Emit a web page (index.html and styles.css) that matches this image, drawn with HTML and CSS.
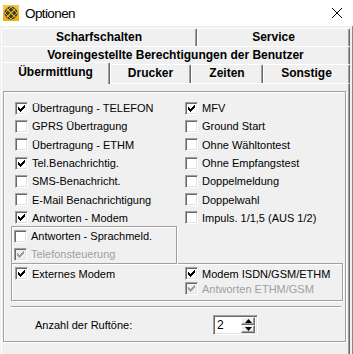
FILE: index.html
```html
<!DOCTYPE html>
<html lang="de">
<head>
    <meta charset="UTF-8">
    <title>Optionen</title>
    <link rel="stylesheet" href="styles.css">
</head>
<body>
    <div class="titlebar">
        <svg class="app-icon" width="16" height="16" viewBox="0 0 16 16">
            <rect x="0" y="0" width="16" height="16" fill="#e8b414"/>
            <rect x="0" y="0" width="16" height="8" fill="#f7d257" opacity="0.6"/>
            <circle cx="8" cy="8" r="6.5" fill="#3a3a3a"/>
            <path d="M8 2 L14 8 L8 14 L2 8 Z" fill="none" stroke="#e8b414" stroke-width="1"/>
            <path d="M3.5 3.5 L12.5 12.5 M12.5 3.5 L3.5 12.5" stroke="#e8b414" stroke-width="1.2"/>
        </svg>
        <span class="title">Optionen</span>
        <svg class="close" width="12" height="12" viewBox="0 0 12 12">
            <path d="M1 1 L11 11 M11 1 L1 11" stroke="#000" stroke-width="1"/>
        </svg>
    </div>

    <div class="client">
        <div class="tabs">
            <div class="tab-row">
                <div class="tab w-scharf">Scharfschalten</div>
                <div class="tab w-service">Service</div>
            </div>
            <div class="tab-row">
                <div class="tab w-full">Voreingestellte Berechtigungen der Benutzer</div>
            </div>
            <div class="tab-row front">
                <div class="tab selected w-uebermittlung">Übermittlung</div>
                <div class="tab w-drucker">Drucker</div>
                <div class="tab w-zeiten">Zeiten</div>
                <div class="tab w-sonstige">Sonstige</div>
            </div>
        </div>

        <div class="page">
            <div class="frame">
                <div class="columns">
                    <div class="col-left">
                        <div class="check"><span class="cb on"><svg viewBox="0 0 13 13"><path d="M9 3h1v1h-1zM8 4h2v1h-2zM3 5h1v1h-1zM7 5h3v1h-3zM3 6h2v1h-2zM6 6h3v1h-3zM3 7h5v1h-5zM4 8h3v1h-3zM5 9h1v1h-1z"/></svg></span>Übertragung - TELEFON</div>
                        <div class="check"><span class="cb"></span>GPRS Übertragung</div>
                        <div class="check"><span class="cb"></span>Übertragung - ETHM</div>
                        <div class="check"><span class="cb on"><svg viewBox="0 0 13 13"><path d="M9 3h1v1h-1zM8 4h2v1h-2zM3 5h1v1h-1zM7 5h3v1h-3zM3 6h2v1h-2zM6 6h3v1h-3zM3 7h5v1h-5zM4 8h3v1h-3zM5 9h1v1h-1z"/></svg></span>Tel.Benachrichtig.</div>
                        <div class="check"><span class="cb"></span>SMS-Benachricht.</div>
                        <div class="check"><span class="cb"></span>E-Mail Benachrichtigung</div>
                        <div class="check"><span class="cb on"><svg viewBox="0 0 13 13"><path d="M9 3h1v1h-1zM8 4h2v1h-2zM3 5h1v1h-1zM7 5h3v1h-3zM3 6h2v1h-2zM6 6h3v1h-3zM3 7h5v1h-5zM4 8h3v1h-3zM5 9h1v1h-1z"/></svg></span>Antworten - Modem</div>

                        <div class="subbox">
                            <div class="check"><span class="cb"></span>Antworten - Sprachmeld.</div>
                            <div class="check disabled"><span class="cb on"><svg viewBox="0 0 13 13"><path d="M9 3h1v1h-1zM8 4h2v1h-2zM3 5h1v1h-1zM7 5h3v1h-3zM3 6h2v1h-2zM6 6h3v1h-3zM3 7h5v1h-5zM4 8h3v1h-3zM5 9h1v1h-1z"/></svg></span>Telefonsteuerung</div>
                        </div>
                    </div>
                    <div class="col-right">
                        <div class="check"><span class="cb on"><svg viewBox="0 0 13 13"><path d="M9 3h1v1h-1zM8 4h2v1h-2zM3 5h1v1h-1zM7 5h3v1h-3zM3 6h2v1h-2zM6 6h3v1h-3zM3 7h5v1h-5zM4 8h3v1h-3zM5 9h1v1h-1z"/></svg></span>MFV</div>
                        <div class="check"><span class="cb"></span>Ground Start</div>
                        <div class="check"><span class="cb"></span>Ohne Wähltontest</div>
                        <div class="check"><span class="cb"></span>Ohne Empfangstest</div>
                        <div class="check"><span class="cb"></span>Doppelmeldung</div>
                        <div class="check"><span class="cb"></span>Doppelwahl</div>
                        <div class="check"><span class="cb"></span>Impuls. 1/1,5 (AUS 1/2)</div>
                    </div>
                </div>

                <div class="modem-box">
                    <div class="modem-left">
                        <div class="check"><span class="cb on"><svg viewBox="0 0 13 13"><path d="M9 3h1v1h-1zM8 4h2v1h-2zM3 5h1v1h-1zM7 5h3v1h-3zM3 6h2v1h-2zM6 6h3v1h-3zM3 7h5v1h-5zM4 8h3v1h-3zM5 9h1v1h-1z"/></svg></span>Externes Modem</div>
                    </div>
                    <div class="modem-right">
                        <div class="check"><span class="cb on"><svg viewBox="0 0 13 13"><path d="M9 3h1v1h-1zM8 4h2v1h-2zM3 5h1v1h-1zM7 5h3v1h-3zM3 6h2v1h-2zM6 6h3v1h-3zM3 7h5v1h-5zM4 8h3v1h-3zM5 9h1v1h-1z"/></svg></span>Modem ISDN/GSM/ETHM</div>
                        <div class="check disabled"><span class="cb on"><svg viewBox="0 0 13 13"><path d="M9 3h1v1h-1zM8 4h2v1h-2zM3 5h1v1h-1zM7 5h3v1h-3zM3 6h2v1h-2zM6 6h3v1h-3zM3 7h5v1h-5zM4 8h3v1h-3zM5 9h1v1h-1z"/></svg></span>Antworten ETHM/GSM</div>
                    </div>
                </div>

                <div class="separator"></div>

                <div class="rings">
                    <span class="rings-label">Anzahl der Ruftöne:</span>
                    <div class="spin">
                        <span class="spin-value">2</span>
                        <div class="spin-buttons">
                            <div class="spin-btn"><svg width="7" height="4" viewBox="0 0 7 4"><path d="M3.5 0 L7 4 L0 4 Z"/></svg></div>
                            <div class="spin-btn"><svg width="7" height="4" viewBox="0 0 7 4"><path d="M0 0 L7 0 L3.5 4 Z"/></svg></div>
                        </div>
                    </div>
                </div>
            </div>
        </div>
    </div>
</body>
</html>
```

FILE: styles.css
```css
* {
    margin: 0;
    padding: 0;
    box-sizing: border-box;
}

body {
    width: 353px;
    height: 354px;
    overflow: hidden;
    background: #f0f0f0;
    font-family: "Liberation Sans", Arial, sans-serif;
    font-size: 11px;
    color: #000;
}

/* title bar */
.titlebar {
    height: 26px;
    background: #fff;
    display: flex;
    align-items: center;
    padding-left: 3px;
}

.app-icon {
    display: block;
}

.title {
    margin-left: 6px;
    font-size: 13.5px;
    letter-spacing: -0.6px;
}

.close {
    margin-left: auto;
    margin-right: 10px;
}

/* client area */
.client {
    height: 328px;
    padding: 2px 2px 0 1px;
    border-right: 1px solid #8c8c8c;
}

.tab-row {
    display: flex;
    height: 18px;
}

.tab-row.front {
    height: 19px;
    align-items: flex-end;
}

.tab {
    height: 100%;
    background: #f0f0f0;
    border: 1px solid #fff;
    border-right-color: #696969;
    border-bottom: none;
    border-radius: 2px 2px 0 0;
    box-shadow: inset -1px 0 #a0a0a0;
    font-weight: bold;
    font-size: 12px;
    text-align: center;
    line-height: 17px;
}

.tab.selected {
    position: relative;
    z-index: 1;
    height: 22px;
    margin-top: -2px;
    margin-bottom: -1px;
    line-height: 18px;
}

.w-scharf { width: 196px; }
.w-service { width: 153px; }
.w-full { width: 349px; }
.w-uebermittlung { width: 109px; }
.w-drucker { width: 81px; }
.w-zeiten { width: 72px; }
.w-sonstige { width: 87px; }

/* tab page */
.page {
    height: 280px;
    border-top: 1px solid #fff;
    border-left: 1px solid #fff;
    border-right: 1px solid #696969;
    box-shadow: inset -1px 0 #a0a0a0;
    padding: 7px 0 0 1px;
}

.frame {
    width: 343px;
    border: 1px solid #a0a0a0;
    box-shadow: 1px 1px 0 #fff, inset 1px 1px 0 #fff;
    padding: 7px 0 6px 0;
}

.columns {
    display: flex;
}

.col-left {
    width: 177px;
    padding-left: 7px;
}

.col-left > .check {
    padding-left: 4px;
}

.col-right {
    flex: 1;
}

.col-right .check {
    padding-left: 4px;
}

.check {
    display: flex;
    align-items: center;
    height: 18.3px;
    white-space: nowrap;
}

.cb {
    width: 13px;
    height: 13px;
    margin-right: 4px;
    flex-shrink: 0;
    background: #fff;
    border: 1px solid;
    border-color: #a0a0a0 #fff #fff #a0a0a0;
    box-shadow: inset 1px 1px 0 #696969, inset -1px -1px 0 #e3e3e3;
    position: relative;
}

.cb svg {
    position: absolute;
    left: -1px;
    top: -1px;
    width: 13px;
    height: 13px;
    fill: #000;
    shape-rendering: crispEdges;
}

.check.disabled {
    color: #a0a0a0;
}

.check.disabled .cb {
    background: #f0f0f0;
}

.check.disabled .cb svg {
    fill: #a0a0a0;
}

.subbox {
    width: 166px;
    height: 38px;
    margin-top: -1px;
    border: 1px solid #a0a0a0;
    box-shadow: 1px 1px 0 #fff, inset 1px 1px 0 #fff;
    padding-left: 2px;
}

.subbox .check {
    height: 18px;
}

/* modem group */
.modem-box {
    display: flex;
    width: 332px;
    height: 38px;
    margin: -1px 0 0 7px;
    border: 1px solid #a0a0a0;
    box-shadow: 1px 1px 0 #fff, inset 1px 1px 0 #fff;
    padding-top: 2px;
}

.modem-box .check {
    height: 15px;
}

.modem-left {
    width: 169px;
    padding-left: 3px;
}

.modem-right {
    flex: 1;
    padding-left: 4px;
}

.separator {
    width: 330px;
    height: 1px;
    margin: 5px 0 0 7px;
    background: #a0a0a0;
    box-shadow: 0 1px 0 #fff;
}

/* rings */
.rings {
    display: flex;
    align-items: center;
    height: 20px;
    margin-top: 8px;
    padding-left: 31px;
}

.rings-label {
    width: 178px;
}

.spin {
    display: flex;
    width: 45px;
    height: 20px;
    background: #fff;
    border: 1px solid;
    border-color: #a0a0a0 #fff #fff #a0a0a0;
    box-shadow: inset 1px 1px 0 #696969, inset -1px -1px 0 #e3e3e3;
    padding: 1px 2px 1px 3px;
}

.spin-value {
    flex: 1;
    font-size: 12px;
    line-height: 16px;
}

.spin-buttons {
    width: 14px;
    display: flex;
    flex-direction: column;
}

.spin-btn {
    flex: 1;
    display: flex;
    align-items: center;
    justify-content: center;
    background: #f0f0f0;
    border: 1px solid;
    border-color: #fff #696969 #696969 #fff;
    box-shadow: inset -1px -1px 0 #a0a0a0;
}

.spin-btn svg {
    fill: #000;
    display: block;
}
```
